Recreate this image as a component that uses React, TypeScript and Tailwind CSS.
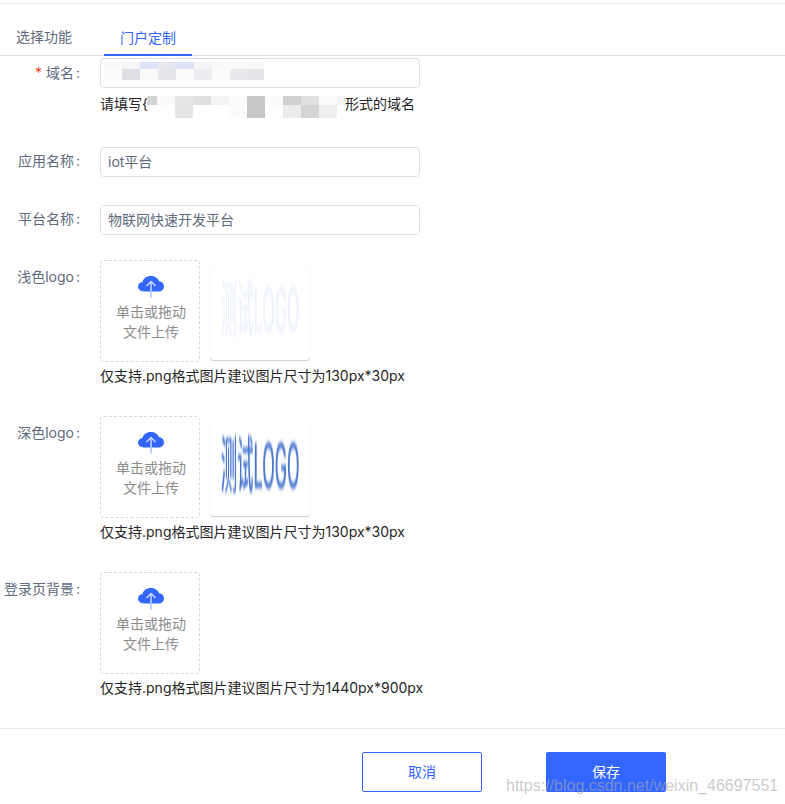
import type { ReactNode } from 'react';

const cjk = "font-['Inter','Noto_Sans_CJK_SC',sans-serif]";

// privacy mosaic blocks: [left, width, colour]
const domainTop = [
  [3, 18, '#f9f9fa'], [21, 18, '#f6f6f7'], [39, 18, '#dde3f8'], [57, 9, '#eaebf0'], [66, 9, '#e4e6f2'],
  [75, 18, '#dde3f8'], [93, 18, '#f5f5f7'], [111, 18, '#f9f9fa'], [129, 18, '#f9f9fa'], [147, 16, '#f9f9fa'],
] as const;
const domainBottom = [
  [3, 18, '#fbfbfb'], [21, 18, '#dfe0e5'], [39, 18, '#fafafb'], [57, 9, '#e6e7eb'], [66, 9, '#e4e5e9'],
  [75, 18, '#fbfbfc'], [93, 18, '#ecedf0'], [111, 18, '#fbfbfb'], [129, 18, '#e9e9ed'], [147, 16, '#e3e4e8'],
] as const;
const hintTop = [
  [0, 10, '#d4d4d4'], [10, 18, '#fafafa'], [28, 18, '#e6e6e6'], [46, 18, '#e0e0e0'], [64, 18, '#f5f5f5'],
  [82, 18, '#fcfcfc'], [100, 18, '#c9c9c9'], [118, 18, '#fafafa'], [136, 18, '#d0d0d0'], [154, 18, '#e0e0e0'],
  [172, 18, '#fbfbfb'], [190, 8, '#f3f3f3'],
] as const;
const hintBottom = [
  [28, 18, '#e4e4e4'], [82, 18, '#fbfbfb'], [100, 18, '#c7c7c7'], [136, 18, '#ebebeb'], [154, 18, '#d4d4d4'], [172, 18, '#efefef'],
] as const;

function Blocks({ items, h }: { items: readonly (readonly [number, number, string])[]; h: string }) {
  return (
    <div className={`relative ${h}`}>
      {items.map(([left, width, color]) => (
        <span key={left} className="absolute top-0 bottom-0" style={{ left, width, background: color }} />
      ))}
    </div>
  );
}

function Row({
  label,
  required,
  className,
  labelClass,
  children,
}: {
  label: string;
  required?: boolean;
  className?: string;
  labelClass: string;
  children: ReactNode;
}) {
  return (
    <div className={`flex ${className ?? ''}`}>
      <label className={`w-[80px] shrink-0 text-right text-sm text-[#606a7e] whitespace-nowrap ${labelClass}`}>
        {required && <span className="text-[#f5412a] mr-1">*</span>}
        {label}
        <span className="ml-[2px]">:</span>
      </label>
      <div className="ml-[20px] min-w-0">{children}</div>
    </div>
  );
}

function CloudUpload() {
  return (
    <svg width="28" height="26" viewBox="0 0 28 26" className="block">
      <path
        d="M7 19.500C3.400 19.500 1 17.200 1 14.600c0-2.400 1.900-4.200 4.400-4.600C6.400 6.300 9.700 4 13.800 4c3.900 0 7.100 2.100 8.200 5.100 3 .4 5 2.700 5 5.300 0 2.800-2.400 5.100-5.500 5.100Z"
        fill="#3366ff"
      />
      <path d="M14 25.500V19.500" fill="none" stroke="#a9bfff" strokeWidth="1.500" />
      <path d="M14 19.500V9.500M9.500 14 14 9.500l4.500 4.500" fill="none" stroke="#c9d7ff" strokeWidth="1.500" />
    </svg>
  );
}

function Upload() {
  return (
    <div className="w-[100px] h-[102px] border border-dashed border-[#d9d9d9] rounded flex flex-col items-center pt-[11px] pl-[2px]">
      <CloudUpload />
      <p className="mt-[4px] text-sm leading-5 text-[#8c8c8c] text-center">
        单击或拖动
        <br />
        文件上传
      </p>
    </div>
  );
}

function Preview({ color }: { color: string }) {
  return (
    <div className="w-[100px] h-[100px] rounded shadow-[0_1px_1px_rgba(0,0,0,0.2)] bg-white flex items-center justify-center overflow-hidden">
      <span
        className={`text-[20px] font-medium leading-none whitespace-nowrap blur-[0.7px] scale-x-[0.82] scale-y-[3.1] ${color}`}
      >
        测试LOGO
      </span>
    </div>
  );
}

function LogoRow({
  label,
  hint,
  preview,
  className,
}: {
  label: string;
  hint: string;
  preview?: string;
  className?: string;
}) {
  return (
    <Row label={label} className={className} labelClass="leading-[34px]">
      <div className="flex items-start gap-[10px]">
        <Upload />
        {preview && <Preview color={preview} />}
      </div>
      <p className="mt-[4px] text-sm leading-5 text-[#262626] whitespace-nowrap">{hint}</p>
    </Row>
  );
}

const inputClass =
  'block w-[320px] h-[30px] border border-[#dcdfe6] rounded pl-[7px] pr-2 pb-[3px] text-sm text-[#606a7e] outline-none';

export default function App() {
  return (
    <div className={`relative h-[804px] w-[785px] overflow-hidden bg-white ${cjk}`}>
      <div className="h-[4px] border-b border-[#ebebeb]" />

      {/* Tabs */}
      <div className="flex h-[52px] items-end border-b border-[#dcdfe6] text-sm pl-[16px]">
        <span className="h-[36px] leading-[36px] text-[#606a7e]">选择功能</span>
        <span className="ml-[32px] h-[36px] w-[88px] text-center leading-[36px] text-[#3366ff] border-b-2 border-[#3366ff] -mb-px">
          门户定制
        </span>
      </div>

      <form className="pt-[2px]">
        <Row label="域名" required labelClass="leading-[30px]">
          <div className="relative h-[30px] w-[320px] border border-[#dcdfe6] rounded">
            <div className="absolute inset-x-0 top-[3px]">
              <Blocks items={domainTop} h="h-[7px]" />
              <Blocks items={domainBottom} h="h-[11px]" />
            </div>
          </div>
          <div className="relative mt-[6px] h-[20px] w-[320px] text-sm leading-5 text-[#262626] flex whitespace-nowrap">
            <span>请填写{'{'}</span>
            <span className="ml-auto mr-[5px]">形式的域名</span>
            <div className="absolute left-[47px] top-[2px]">
              <div className="relative w-[198px]">
                <Blocks items={hintTop} h="h-[9px]" />
                <Blocks items={hintBottom} h="h-[13px]" />
              </div>
            </div>
          </div>
        </Row>

        <Row label="应用名称" className="mt-[33px]" labelClass="leading-[28px]">
          <input className={inputClass} defaultValue="iot平台" />
        </Row>
        <Row label="平台名称" className="mt-[28px]" labelClass="leading-[28px]">
          <input className={inputClass} defaultValue="物联网快速开发平台" />
        </Row>

        <LogoRow
          label="浅色logo"
          className="mt-[25px]"
          preview="text-[#eef2fb]"
          hint="仅支持.png格式图片建议图片尺寸为130px*30px"
        />
        <LogoRow
          label="深色logo"
          className="mt-[30px]"
          preview="text-[#4a78cf]"
          hint="仅支持.png格式图片建议图片尺寸为130px*30px"
        />
        <LogoRow
          label="登录页背景"
          className="mt-[30px]"
          hint="仅支持.png格式图片建议图片尺寸为1440px*900px"
        />
      </form>

      {/* Footer */}
      <div className="mt-[30px] border-t border-[#e8e8e8] pt-[23px] pl-[362px] flex gap-[64px] text-sm">
        <button className="w-[120px] h-[40px] border border-[#3366ff] rounded-[2px] text-[#3366ff]">取消</button>
        <button className="w-[120px] h-[40px] rounded-[2px] bg-[#3366ff] text-white">保存</button>
      </div>

      {/* Watermark */}
      <span className="absolute left-[506px] top-[776px] font-['Liberation_Sans',sans-serif] text-[16px] leading-5 text-[#a8a8a8]/60 whitespace-nowrap">
        https://blog.csdn.net/weixin_46697551
      </span>
    </div>
  );
}
